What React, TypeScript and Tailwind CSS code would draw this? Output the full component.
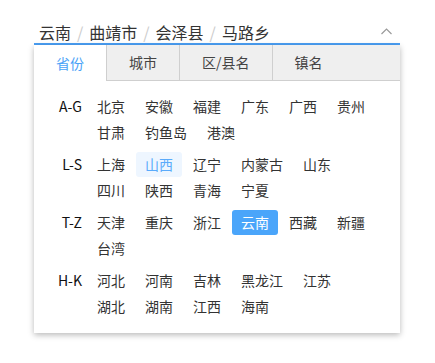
import { useState } from "react";

interface Group {
  label: string;
  items: string[];
}

const groups: Group[] = [
  { label: "A-G", items: ["北京", "安徽", "福建", "广东", "广西", "贵州", "甘肃", "钓鱼岛", "港澳"] },
  { label: "L-S", items: ["上海", "山西", "辽宁", "内蒙古", "山东", "四川", "陕西", "青海", "宁夏"] },
  { label: "T-Z", items: ["天津", "重庆", "浙江", "云南", "西藏", "新疆", "台湾"] },
  { label: "H-K", items: ["河北", "河南", "吉林", "黑龙江", "江苏", "湖北", "湖南", "江西", "海南"] },
];

const tabs = ["省份", "城市", "区/县名", "镇名"];
const path = ["云南", "曲靖市", "会泽县", "马路乡"];

export default function App() {
  const [activeTab, setActiveTab] = useState(0);
  const [selected, setSelected] = useState("云南");
  const hovered = "山西";

  return (
    <div className="w-[435px] h-[363px] bg-white font-['Noto_Sans_CJK_SC',sans-serif]">
      <div className="ml-[34px] w-[366px] pt-[21px]">
        {/* header */}
        <div className="flex items-center justify-between h-[24px] pl-[5px] pr-[8px] border-b-2 border-[#4a9ff5]">
          <div className="flex items-center text-[16px] leading-[22px] text-[#333]">
            {path.map((p, i) => (
              <span key={p} className="flex items-center">
                {i > 0 && <span className="px-[6px] text-[#ccc]">/</span>}
                {p}
              </span>
            ))}
          </div>
          <svg width="11" height="7" viewBox="0 0 11 7" className="mt-[-2px]">
            <polyline points="0.5,6 5.5,1 10.5,6" fill="none" stroke="#9a9a9a" strokeWidth="1.2" />
          </svg>
        </div>

        {/* panel */}
        <div className="bg-white shadow-[0_2px_6px_rgba(0,0,0,0.28)]">
          <div className="flex h-[36px] text-[14px] bg-[#efefef]">
            {tabs.map((t, i) => (
              <div
                key={t}
                onClick={() => setActiveTab(i)}
                className={`flex items-center px-[22px] cursor-pointer ${i < tabs.length - 1 ? "border-r border-[#cfcfcf]" : ""} ${
                  i === activeTab ? "bg-white text-[#4ba3f7]" : "border-b border-[#cfcfcf] text-[#444]"
                }`}
              >
                {t}
              </div>
            ))}
            <div className="flex-1 border-b border-[#cfcfcf]" />
          </div>

          <div className="flex flex-col gap-[7px] pt-[13px] pb-[14px] pr-[14px]">
            {groups.map((g) => (
              <div key={g.label} className="flex">
                <div className="w-[48px] shrink-0 text-right text-[14px] leading-[25px] text-[#111]">{g.label}</div>
                <div className="ml-[6px] flex flex-1 flex-wrap gap-x-[2px] gap-y-px">
                  {g.items.map((it) => (
                    <div
                      key={it}
                      onClick={() => setSelected(it)}
                      className={`h-[25px] px-[9px] text-[14px] leading-[25px] rounded-[3px] cursor-pointer ${
                        it === selected
                          ? "bg-[#4aa5fa] text-white"
                          : it === hovered
                          ? "bg-[#eef6ff] text-[#5aabfb]"
                          : "text-[#333]"
                      }`}
                    >
                      {it}
                    </div>
                  ))}
                </div>
              </div>
            ))}
          </div>
        </div>
      </div>
    </div>
  );
}
